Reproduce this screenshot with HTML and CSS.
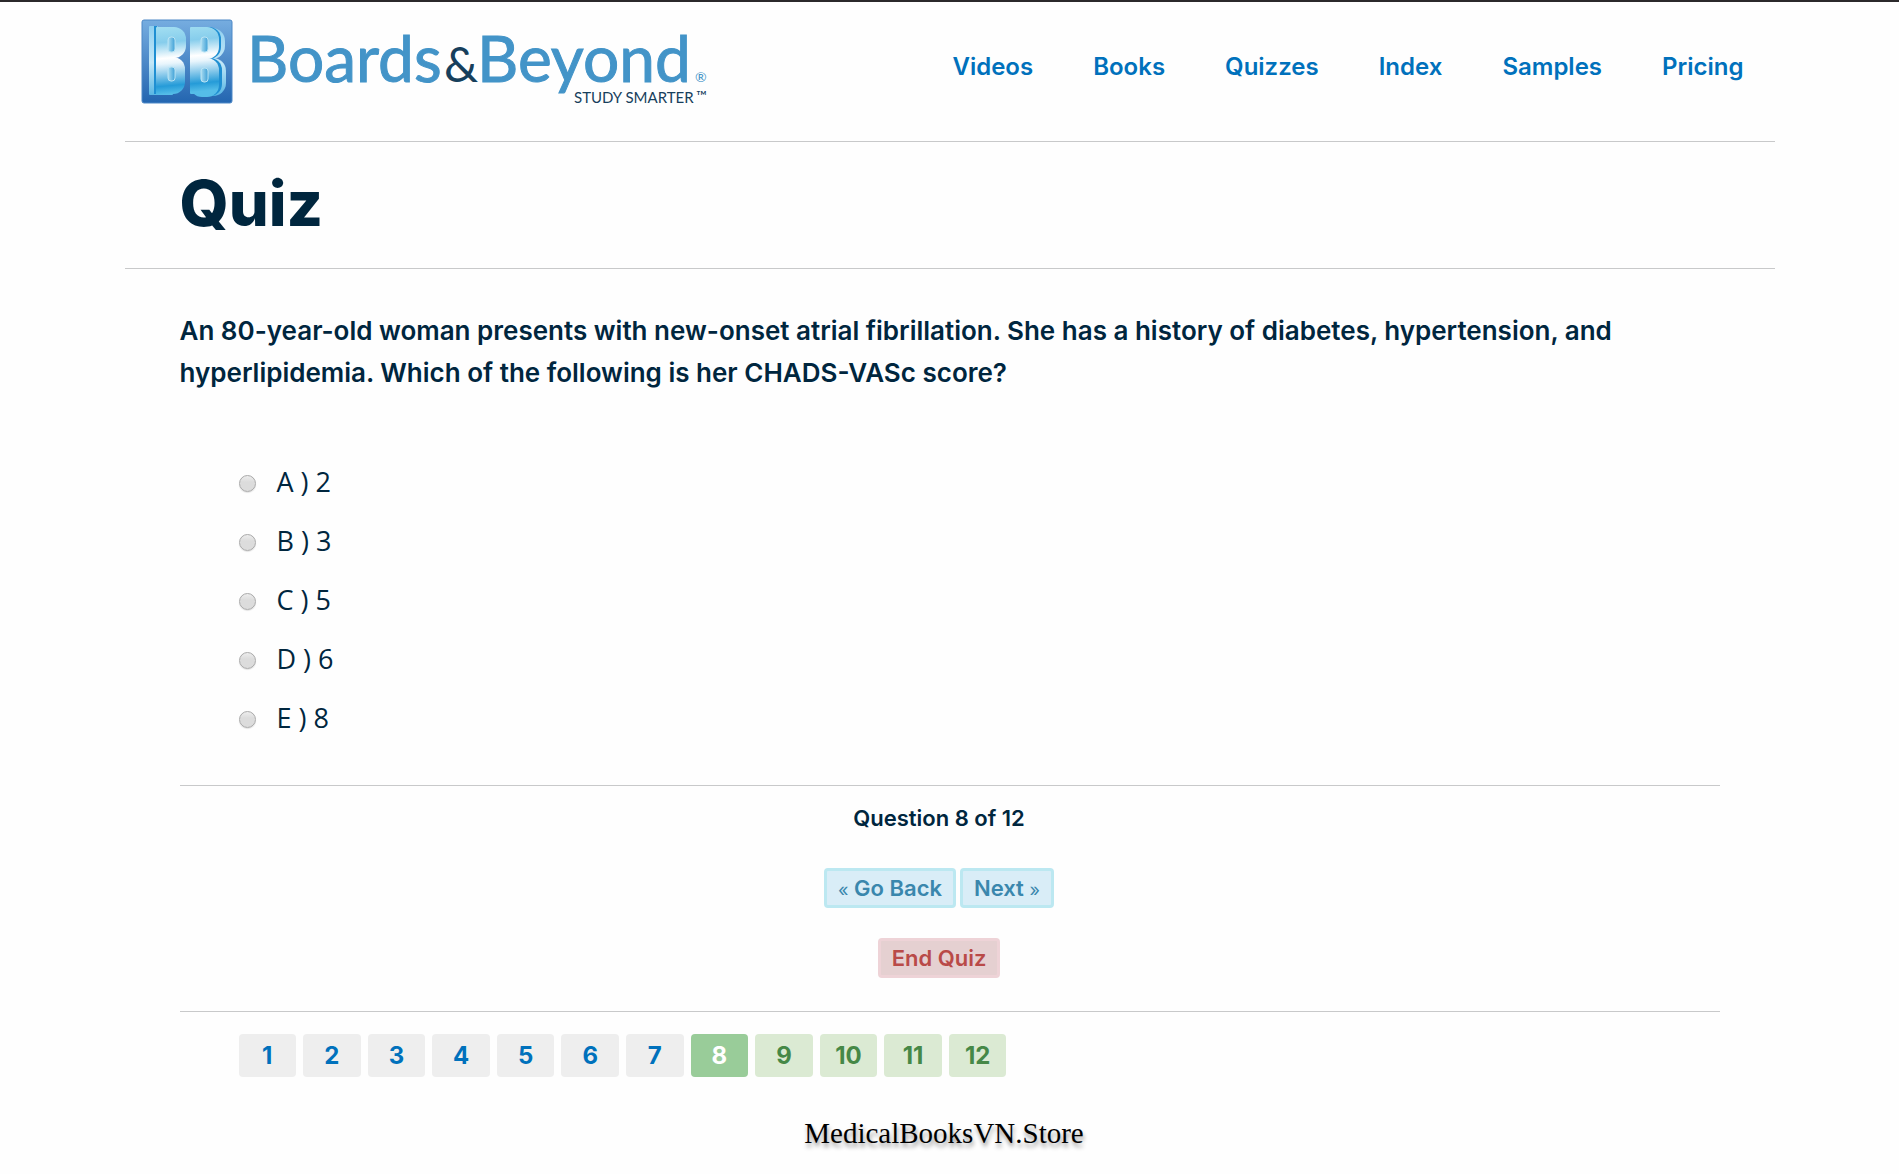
FILE: index.html
```html
<!DOCTYPE html>
<html lang="en">
<head>
<meta charset="utf-8">
<title>Quiz – Boards &amp; Beyond</title>
<link rel="stylesheet" href="styles.css">
</head>
<body>
<div class="page">
  <header class="site-header">
    <a class="brand" href="#" aria-label="Boards &amp; Beyond">
      <svg class="logo" width="570" height="92" viewBox="0 0 570 92">
        <defs>
          <linearGradient id="tile" x1="0" y1="0" x2="0" y2="1">
            <stop offset="0" stop-color="#76ade0"/><stop offset="1" stop-color="#2365b0"/>
          </linearGradient>
          <linearGradient id="face" gradientUnits="userSpaceOnUse" x1="0" y1="9" x2="6" y2="78">
            <stop offset="0" stop-color="#a5e0f2"/><stop offset=".25" stop-color="#86cdec"/><stop offset=".48" stop-color="#fff"/>
            <stop offset=".56" stop-color="#e8f5fc"/><stop offset=".88" stop-color="#259bd8"/><stop offset="1" stop-color="#55bde8"/>
          </linearGradient>
          <linearGradient id="side" gradientUnits="userSpaceOnUse" x1="0" y1="9" x2="0" y2="80">
            <stop offset="0" stop-color="#8fd0f0"/><stop offset=".5" stop-color="#c4e8f8"/><stop offset="1" stop-color="#4fb2e2"/>
          </linearGradient>
          <linearGradient id="hole" x1="0" y1="0" x2="1" y2="0">
            <stop offset="0" stop-color="#a9dcf1"/><stop offset="1" stop-color="#3d9fd6"/>
          </linearGradient>
        </defs>
        <rect x="1" y="2" width="90" height="83" rx="2" fill="url(#tile)" stroke="#4d88c6"/>
        <g fill="url(#side)">
          <rect x="8" y="8" width="9" height="69" rx="1"/>
          <rect x="58" y="10" width="26" height="31" rx="13"/>
          <rect x="58" y="40" width="27" height="38" rx="13"/>
        </g>
        <g fill="#1f8fd2">
          <rect x="13" y="8" width="3" height="68"/>
          <rect x="56" y="9" width="24" height="32" rx="12"/>
          <rect x="56" y="40" width="25" height="38" rx="12"/>
        </g>
        <g fill="url(#face)">
          <rect x="15" y="9" width="17" height="68" rx="1"/>
          <rect x="15" y="9" width="30" height="31" rx="12"/>
          <rect x="15" y="39" width="29" height="37" rx="12"/>
          <rect x="49" y="9" width="16" height="67" rx="1"/>
          <rect x="49" y="9" width="29" height="32" rx="12"/>
          <rect x="49" y="40" width="29" height="39" rx="12"/>
        </g>
        <g fill="url(#hole)" stroke="#b9e3f4">
          <rect x="27" y="19" width="7" height="15" rx="3"/>
          <rect x="27" y="49" width="7" height="14" rx="3"/>
          <rect x="60" y="19" width="7" height="15" rx="3"/>
          <rect x="60" y="50" width="7" height="14" rx="3"/>
        </g>
        <g class="wordmark">
          <text class="name" x="106" y="64">Boards</text>
          <text class="amp" x="303" y="64">&amp;</text>
          <text class="name" x="336" y="64">Beyond</text>
          <text class="reg" x="554" y="64">®</text>
          <text class="tagline" x="433" y="85">STUDY SMARTER</text>
          <text class="tm" x="555" y="83">™</text>
        </g>
      </svg>
    </a>
    <nav class="main-nav" aria-label="Main">
      <a href="#">Videos</a>
      <a href="#">Books</a>
      <a href="#">Quizzes</a>
      <a href="#">Index</a>
      <a href="#">Samples</a>
      <a href="#">Pricing</a>
    </nav>
  </header>

  <div class="title-bar"><h1>Quiz</h1></div>

  <main class="content">
    <form class="quiz">
      <fieldset class="question">
        <legend>An 80-year-old woman presents with new-onset atrial fibrillation. She has a history of diabetes, hypertension, and hyperlipidemia. Which of the following is her CHADS-VASc score?</legend>
        <div class="options">
          <label><input type="radio" name="answer" value="A"><span>A ) 2</span></label>
          <label><input type="radio" name="answer" value="B"><span>B ) 3</span></label>
          <label><input type="radio" name="answer" value="C"><span>C ) 5</span></label>
          <label><input type="radio" name="answer" value="D"><span>D ) 6</span></label>
          <label><input type="radio" name="answer" value="E"><span>E ) 8</span></label>
        </div>
      </fieldset>
      <div class="controls">
        <p class="progress">Question 8 of 12</p>
        <div class="steps">
          <button type="button" class="btn btn-step"><span class="mark">«</span> Go Back</button>
          <button type="button" class="btn btn-step">Next <span class="mark">»</span></button>
        </div>
        <button type="button" class="btn btn-end">End Quiz</button>
      </div>
    </form>
    <nav class="pager" aria-label="Questions">
      <a href="#">1</a>
      <a href="#">2</a>
      <a href="#">3</a>
      <a href="#">4</a>
      <a href="#">5</a>
      <a href="#">6</a>
      <a href="#">7</a>
      <a href="#" class="current" aria-current="page">8</a>
      <a href="#" class="open">9</a>
      <a href="#" class="open">10</a>
      <a href="#" class="open">11</a>
      <a href="#" class="open">12</a>
    </nav>
  </main>
  <footer class="site-footer">MedicalBooksVN.Store</footer>
</div>
</body>
</html>
```
FILE: styles.css
```css
* { box-sizing: border-box; }

body {
  margin: 0;
  border-top: 2px solid #2b292b;
  background: #fefefe;
  color: #00263e;
  font-family: Inter, "Liberation Sans", sans-serif;
  font-size: 26px;
}

a { color: #0071bc; text-decoration: none; }

.page { max-width: 1650px; margin: 0 auto; }

/* Header */
.site-header {
  display: flex;
  justify-content: space-between;
  align-items: flex-start;
  padding: 16px 31px 31px 16px;
  border-bottom: 1px solid #c8c9ca;
}
.logo { display: block; overflow: visible; }
.wordmark { fill: #4394c8; font-family: Lato, sans-serif; }
.wordmark .name { font-size: 64px; stroke: #4394c8; stroke-width: 1px; }
.wordmark .amp { fill: #173f5c; font-size: 48px; }
.wordmark .reg { font-size: 14px; }
.wordmark .tagline { fill: #173f5c; font-size: 15px; }
.wordmark .tm { fill: #173f5c; font-size: 14px; }

.main-nav {
  display: flex;
  gap: 60px;
  padding-top: 34px;
  font-size: 24px;
  font-weight: 600;
  line-height: 30px;
}

/* Title */
.title-bar {
  padding: 22px 55px 25px;
  border-bottom: 1px solid #c8c9ca;
}
h1 { margin: 0; font-size: 63px; font-weight: 800; line-height: 79px; }

/* Question */
.content { padding: 41px 55px 0; }
.question { margin: 0; padding: 0 0 37px; border: 0; }
legend { padding: 0; font-weight: 600; line-height: 42px; }
.options {
  padding: 59px 0 0 59px;
  font-family: "Open Sans", sans-serif;
  font-size: 27px;
  font-weight: 400;
}
.options label {
  display: flex;
  align-items: center;
  gap: 21px;
  width: max-content;
  height: 59px;
  padding-bottom: 3px;
}
.options input {
  appearance: none;
  width: 17px;
  height: 17px;
  margin: 5px 0 0;
  border: 1px solid #a9a9a9;
  border-radius: 50%;
  background: linear-gradient(#ededed, #dcdcdc 40%);
  box-shadow: 0 1px 1px #e2e2e2;
}
.options input:checked { background: radial-gradient(#444 4px, #ddd 5px); }

/* Controls */
.controls {
  display: flex;
  flex-direction: column;
  align-items: center;
  padding: 16px 21px 33px 0;
  border: solid #c8c9ca;
  border-width: 1px 0;
  font-size: 22px;
  font-weight: 600;
}
.progress { margin: 0 0 34px; line-height: 32px; }
.steps { display: flex; gap: 4px; margin-bottom: 30px; }
.btn {
  height: 40px;
  padding: 0 11px;
  border: 3px solid;
  border-radius: 4px;
  font: inherit;
}
.btn-step { color: #3a87ad; background: #d9edf7; border-color: #bce8f1; }
.btn-end { color: #b94a48; background: #e5d0d1; border-color: #eed3d7; }
.mark { font-size: 18px; font-weight: 400; }

/* Question picker */
.pager {
  display: grid;
  grid-template-columns: repeat(12, 1fr);
  gap: 7px;
  max-width: 827px;
  padding: 22px 0 0 59px;
  font-size: 24px;
  font-weight: 700;
}
.pager a { border-radius: 4px; background: #eee; line-height: 43px; text-align: center; }
.pager .current { background: #9c9; color: #fff; }
.pager .open { background: #dbead3; color: #468847; }

.site-footer {
  padding: 36px 11px 24px 0;
  color: #000;
  font-family: "Liberation Serif", serif;
  font-size: 29px;
  line-height: 40px;
  text-align: center;
  text-shadow: 1px 4px 4px #999;
}
```
